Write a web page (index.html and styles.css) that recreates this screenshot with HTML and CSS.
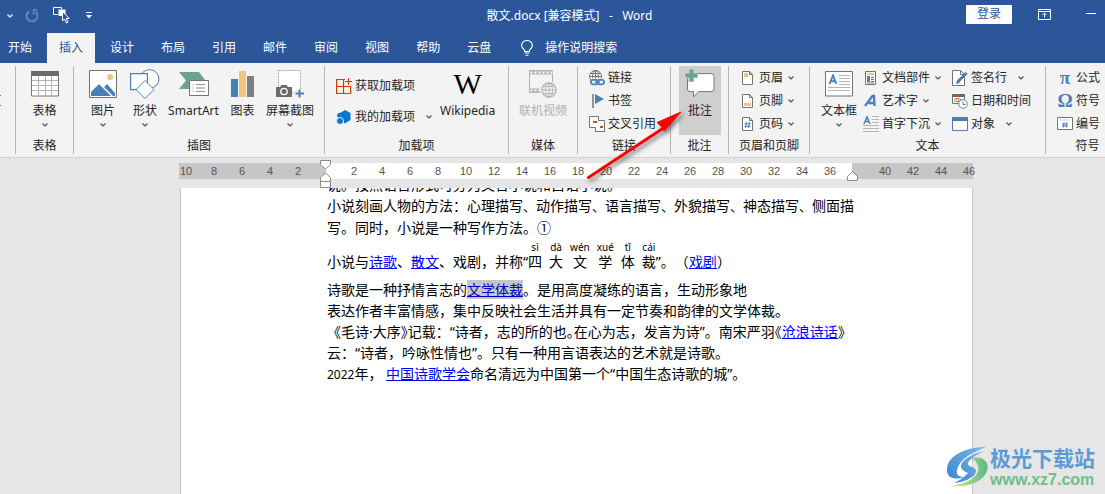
FILE: index.html
```html
<!DOCTYPE html>
<html lang="zh-CN">
<head>
<meta charset="utf-8">
<title>散文.docx [兼容模式] - Word</title>
<link rel="stylesheet" href="styles.css">
</head>
<body>
<svg class="defs" aria-hidden="true">
  <symbol id="chev" viewBox="0 0 6 4"><path d="M.5.5 3 3 5.500.5" fill="none" stroke="#555" stroke-width="1.2"/></symbol>
  <symbol id="sheet" viewBox="0 0 16 16"><path d="M2.500 1.500h7l3 3v10h-10z" fill="#fff" stroke="#747474"/><path d="M9.500 1.500v3h3" fill="none" stroke="#747474"/></symbol>
</svg>

<header class="titlebar">
  <div class="quick">
    <button class="qbtn" aria-label="撤消选项"><svg width="6" height="4" viewBox="0 0 6 4"><path d="M.5.5 3 3 5.500.5" fill="none" stroke="#dfe7f3" stroke-width="1.300"/></svg></button>
    <button class="qbtn redo" aria-label="重复"><svg width="14" height="14" viewBox="0 0 14 14"><path d="M4 2.300A5.500 5.500 0 1 0 10.500 2.600" fill="none" stroke="#6486bb" stroke-width="2"/><path d="M8 .8h4.500M8.500 1v5" fill="none" stroke="#6486bb" stroke-width="1.600"/></svg></button>
    <button class="qbtn select" aria-label="选择对象"><svg width="17" height="17" viewBox="0 0 17 17"><path d="M5 7.500H.5v-7h8v2" fill="none" stroke="#fff"/><path d="M5.500 2.500h7V8L9 5v4H5.500z" fill="#fff"/><path d="M9.500 4.500v9.500l2-2 2 4 1.500-.8-1.700-3.700h2.900z" fill="#2b579a" stroke="#fff"/></svg></button>
    <button class="qbtn" aria-label="自定义快速访问工具栏"><svg width="6" height="7" viewBox="0 0 6 7"><path d="M0 .5h6" stroke="#fff"/><path d="M0 3h6L3 6.500z" fill="#fff"/></svg></button>
  </div>
  <div class="doctitle">散文.docx [兼容模式] &nbsp;&nbsp;-&nbsp;&nbsp; Word</div>
  <div class="winctl">
    <button class="signin">登录</button>
    <button class="qbtn ribbonopt" aria-label="功能区显示选项"><svg width="13" height="11" viewBox="0 0 13 11"><path d="M.5.500h12v10H.5zM.5 2.500h12M6.500 8.500V4.500M4.500 6l2-2 2 2" fill="none" stroke="#fff"/></svg></button>
    <button class="qbtn" aria-label="最小化"><svg width="10" height="2" viewBox="0 0 10 2"><path d="M0 .5h10" stroke="#fff"/></svg></button>
  </div>
</header>

<nav class="tabs">
  <button class="tab first">开始</button>
  <button class="tab active">插入</button>
  <button class="tab">设计</button>
  <button class="tab">布局</button>
  <button class="tab">引用</button>
  <button class="tab">邮件</button>
  <button class="tab">审阅</button>
  <button class="tab">视图</button>
  <button class="tab">帮助</button>
  <button class="tab">云盘</button>
  <button class="tell"><svg width="12" height="16" viewBox="0 0 12 16"><path d="M3.500 11.500V10C2 8.800.6 7.500.6 5.500a5.400 5 0 0 1 10.800 0c0 2-1.400 3.300-2.900 4.500v1.500zM3.500 13h5M4.500 15.300h3" fill="none" stroke="#fff" stroke-width="1.100"/></svg>操作说明搜索</button>
</nav>

<section class="ribbon">
  <div class="group g-page"><div class="body"><i class="sliver"></i></div></div>

  <div class="group g-table">
    <div class="body">
      <button class="big"><svg width="28" height="26" viewBox="0 0 28 26"><path d="M.5.500h27v24.500H.5z" fill="#fff" stroke="#747474"/><path d="M0 0h28v5H0z" fill="#6b6b6b"/><path d="M1 9.500h26M1 14.500h26M1 19.500h26M7.500 5v19.500M14.500 5v19.500M20.500 5v19.500" stroke="#b5b5b5"/></svg><span>表格</span><svg class="chev"><use href="#chev"/></svg></button>
    </div>
    <div class="label">表格</div>
  </div>

  <div class="group g-illus">
    <div class="body">
      <button class="big w42"><svg width="28" height="28" viewBox="0 0 28 28"><path d="M.5.500h27v27H.5z" fill="#fff" stroke="#747474"/><circle cx="21" cy="7" r="3" fill="#eec67c"/><path d="M2 26v-4l8-8L22 26zM15 17l3-3 8 9v3h-2z" fill="#4a80b8"/></svg><span>图片</span><svg class="chev"><use href="#chev"/></svg></button>
      <button class="big w42"><svg width="30" height="30" viewBox="0 0 30 30"><circle cx="19.500" cy="10" r="9.400" fill="#fff" stroke="#4a80b8"/><path d="M.6 4.600h16.800v16H.6z" fill="#fff" stroke="#4a80b8" stroke-width="1.200"/><path d="M15 11.500l9 9-9 9-9-9z" fill="#fff" stroke="#4a80b8"/></svg><span>形状</span><svg class="chev"><use href="#chev"/></svg></button>
      <button class="big w55"><svg width="30" height="26" viewBox="0 0 30 26"><path d="M0 1h20l6 8H10v9H0l7-8.500z" fill="#6ba292"/><path d="M10.500 9.500h19v15h-19z" fill="#fff" stroke="#747474"/><path d="M13.500 13.500h1M13.500 17h1M13.500 20.500h1M17 13.500h9M17 17h9M17 20.500h9" stroke="#8f8f8f"/></svg><span>SmartArt</span></button>
      <button class="big w43"><svg width="23" height="26" viewBox="0 0 23 26"><path d="M0 8h7v18H0z" fill="#4a80b8"/><path d="M8 0h7v26H8z" fill="#eec67c"/><path d="M16 5h7v21h-7z" fill="#7f7f7f"/></svg><span>图表</span></button>
      <button class="big w52"><svg width="28" height="28" viewBox="0 0 28 28"><path d="M2.500.5h22v22h-22z" fill="#fff" stroke="#a8a8a8" stroke-dasharray="2 1"/><path d="M0 17h4l1.500-2h5L12 17h4v10H0z" fill="#6b6b6b"/><circle cx="8" cy="21.500" r="3.200" fill="none" stroke="#fff" stroke-width="1.300"/><path d="M17 20h11v8H17z" fill="#f3f3f3"/><path d="M19.500 23.500H28M23.500 19.500v8" stroke="#4a80b8" stroke-width="2"/></svg><span>屏幕截图</span><svg class="chev"><use href="#chev"/></svg></button>
    </div>
    <div class="label">插图</div>
  </div>

  <div class="group g-addins">
    <div class="body">
      <div class="rows tall">
        <button class="small"><svg width="16" height="16" viewBox="0 0 16 16"><path d="M9 1.500H.6v14h14V8M7.500 1.500v14M.6 8.500h14M12.500 0v7M9 3.500h7" fill="none" stroke="#d83b01" stroke-width="1.200"/></svg><span>获取加载项</span></button>
        <button class="small wide"><svg width="16" height="16" viewBox="0 0 16 16"><path d="M3.500 4.500 9 1l5.500 3v7L9 14.500 7 13z" fill="#0078d4"/><circle cx="4" cy="6.500" r="2.800" fill="#0078d4"/><circle cx="4" cy="12" r="3.500" fill="#0078d4" stroke="#f3f3f3"/></svg><span>我的加载项</span><svg class="chev"><use href="#chev"/></svg></button>
      </div>
      <button class="big wiki"><b class="wlogo">W</b><span>Wikipedia</span></button>
    </div>
    <div class="label">加载项</div>
  </div>

  <div class="group g-media">
    <div class="body">
      <button class="big" disabled><svg width="28" height="30" viewBox="0 0 28 30"><path d="M.5 1.500h23v22H.5z" fill="#f6f3f6" stroke="#b5b1b5"/><path d="M0 3.500h24M0 21.500h24" stroke="#b5b1b5" stroke-width="4"/><path d="M1.500 3.500h22M1.500 21.500h12" stroke="#fff" stroke-width="2" stroke-dasharray="2 2"/><circle cx="20" cy="21" r="9" fill="#f3f3f3"/><circle cx="20" cy="21" r="7" fill="#f7f7f7" stroke="#b5b1b5" stroke-width="1.300"/><path d="M13 21h14M14 17.500h12M14 24.500h12M20 14v14" stroke="#b5b1b5"/><ellipse cx="20" cy="21" rx="3.500" ry="7" fill="none" stroke="#b5b1b5"/></svg><span>联机视频</span></button>
    </div>
    <div class="label">媒体</div>
  </div>

  <div class="group g-links">
    <div class="body">
      <div class="rows">
        <button class="small"><svg width="16" height="16" viewBox="0 0 16 16"><circle cx="6.500" cy="6.500" r="6" fill="#fff" stroke="#747474"/><path d="M.5 6.500h12M1.500 3.500h10M6.500.5v9" stroke="#747474"/><ellipse cx="6.500" cy="6.500" rx="3" ry="6" fill="none" stroke="#747474"/><path d="M2 8.500h14v7H2z" fill="#f3f3f3"/><rect x="1.800" y="9.800" width="7" height="4.600" rx="2.300" fill="none" stroke="#4a80b8" stroke-width="1.700"/><rect x="8.200" y="9.800" width="7" height="4.600" rx="2.300" fill="none" stroke="#4a80b8" stroke-width="1.700"/><path d="M6 12.100h5" stroke="#4a80b8" stroke-width="1.500"/></svg><span>链接</span></button>
        <button class="small"><svg width="16" height="16" viewBox="0 0 16 16"><path d="M4 1v14" stroke="#747474" stroke-width="1.500"/><path d="M6 1l9 5-9 5z" fill="#4a80b8"/></svg><span>书签</span></button>
        <button class="small"><svg width="16" height="16" viewBox="0 0 16 16"><path d="M.5.500h9v11h-9z" fill="#fff" stroke="#747474"/><path d="M9.500 4.500h6v11h-9v-4" fill="#fff" stroke="#747474"/><path d="M4 6h4M11 11h3" stroke="#d24726" stroke-width="2"/></svg><span>交叉引用</span></button>
      </div>
    </div>
    <div class="label">链接</div>
  </div>

  <div class="group g-comment">
    <div class="body">
      <button class="big hot"><svg width="32" height="30" viewBox="0 0 32 30"><path d="M7 4.600h20a3 3 0 0 1 3 3v12a3 3 0 0 1-3 3H14.500L9.500 28v-5.400H6a2.500 2.500 0 0 1-2.500-2.500V8z" fill="#fff" stroke="#7a7a7a"/><path d="M7 0v13M.500 6.500h13" stroke="#cfcfcf" stroke-width="6"/><path d="M7.500.5v12M1.500 6.500h12" stroke="#6ba292" stroke-width="4"/></svg><span>批注</span></button>
    </div>
    <div class="label">批注</div>
  </div>

  <div class="group g-header">
    <div class="body">
      <div class="rows">
        <button class="small"><svg width="16" height="16" viewBox="0 0 16 16"><use href="#sheet"/><path d="M4 3h4v4H4z" fill="#eec67c"/></svg><span>页眉</span><svg class="chev"><use href="#chev"/></svg></button>
        <button class="small"><svg width="16" height="16" viewBox="0 0 16 16"><use href="#sheet"/><path d="M4 10h7v3H4z" fill="#eec67c"/></svg><span>页脚</span><svg class="chev"><use href="#chev"/></svg></button>
        <button class="small"><svg width="16" height="16" viewBox="0 0 16 16"><use href="#sheet"/><path d="M6.500 6 5.500 12M9.500 6 8.500 12M4.500 7.800h6M4.500 10.300h6" stroke="#4a80b8"/></svg><span>页码</span><svg class="chev"><use href="#chev"/></svg></button>
      </div>
    </div>
    <div class="label">页眉和页脚</div>
  </div>

  <div class="group g-text">
    <div class="body">
      <button class="big textbox"><svg width="28" height="26" viewBox="0 0 28 26"><path d="M.5.500h27v24.500H.5z" fill="#fff" stroke="#747474"/><path d="M4.500 13 8 4.500l3.500 8.500M5.500 10.300h5" fill="none" stroke="#4a80b8" stroke-width="1.900"/><path d="M14 4.500h11M14 7.500h11M14 10.500h11M14 13.500h11M3 16.500h22M3 19.500h22" stroke="#b5b5b5"/></svg><span>文本框</span><svg class="chev"><use href="#chev"/></svg></button>
      <div class="rows parts">
        <button class="small"><svg width="16" height="16" viewBox="0 0 16 16"><path d="M2.500 1.500h10v13h-10z" fill="#fff" stroke="#747474"/><path d="M4 4h7" stroke="#eec67c" stroke-width="2"/><path d="M4 6h3v6H4z" fill="#4a80b8"/><path d="M8 7.500h3M8 9.500h3M8 11.500h3M4 13h7" stroke="#747474"/></svg><span>文档部件</span><svg class="chev"><use href="#chev"/></svg></button>
        <button class="small"><svg width="16" height="16" viewBox="0 0 16 16"><path d="M2 13 9.500 3h1.500l.5 10M5.500 10h6" fill="none" stroke="#4a80b8" stroke-width="2.300"/></svg><span>艺术字</span><svg class="chev"><use href="#chev"/></svg></button>
        <button class="small"><svg width="16" height="16" viewBox="0 0 16 16"><path d="M1 8 4 .8 7 8M2 5.500h4" fill="none" stroke="#4a80b8" stroke-width="1.500"/><path d="M9 .5h7M9 3.500h7M9 6.500h7M0 9.500h16M0 12.500h16M0 15.500h16" stroke="#b5b5b5"/></svg><span>首字下沉</span><svg class="chev"><use href="#chev"/></svg></button>
      </div>
      <div class="rows objects">
        <button class="small wide"><svg width="16" height="16" viewBox="0 0 16 16"><path d="M.5.500h8l4 4v11h-12z" fill="#fff" stroke="#747474"/><path d="M8.500.5v4h4" fill="none" stroke="#747474"/><path d="M6 11.500 14.500 3" stroke="#4a80b8" stroke-width="3"/><path d="M4 14l1-4 3 3z" fill="#4a80b8"/></svg><span>签名行</span><svg class="chev"><use href="#chev"/></svg></button>
        <button class="small"><svg width="16" height="16" viewBox="0 0 16 16"><path d="M.5 1.500h12v9H.5z" fill="#fff" stroke="#747474"/><path d="M0 1h13v3H0z" fill="#6b6b6b"/><path d="M2 6.500h9M2 8.500h9" stroke="#8f8f8f" stroke-dasharray="1 1"/><path d="M4 5.500h3v3H4z" fill="#fff" stroke="#e07020"/><circle cx="11" cy="11" r="4.300" fill="#fff" stroke="#5f8cbf"/><path d="M11 8.500V11.500h2.500" fill="none" stroke="#4a80b8"/></svg><span>日期和时间</span></button>
        <button class="small wide"><svg width="16" height="16" viewBox="0 0 16 16"><path d="M.5 1.500h15v13H.5z" fill="#fff" stroke="#4a80b8"/><path d="M0 1h16v4H0z" fill="#4a80b8"/></svg><span>对象</span><svg class="chev"><use href="#chev"/></svg></button>
      </div>
    </div>
    <div class="label">文本</div>
  </div>

  <div class="group g-symbol">
    <div class="body">
      <div class="rows">
        <button class="small"><b class="greek">π</b><span>公式</span></button>
        <button class="small"><b class="greek">Ω</b><span>符号</span></button>
        <button class="small"><svg width="16" height="16" viewBox="0 0 16 16"><path d="M.5 1.500h15v12H.5z" fill="#fff" stroke="#747474"/><path d="M3 4h10" stroke="#b5b5b5" stroke-dasharray="2 1"/><path d="M7 6.500 6.300 11.500M9.700 6.500 9 11.500M5 8h6M5 10h6" stroke="#4a80b8"/></svg><span>编号</span></button>
      </div>
    </div>
    <div class="label">符号</div>
  </div>
</section>

<main class="workspace">
  <div class="ruler">
    <div class="seg before"><span>10</span><span>8</span><span>6</span><span>4</span><span>2</span></div>
    <div class="seg live">
      <svg class="indent left" width="11" height="28" viewBox="0 0 11 28"><path d="M.5.500h10v4l-5 4.500-5-4.500zM.5 21.500v-4l5-4.500 5 4.500v4zM.5 21.500h10v6H.5z" fill="#fff" stroke="#8a8a8a"/></svg>
      <span>2</span><span>4</span><span>6</span><span>8</span><span>10</span><span>12</span><span>14</span><span>16</span><span>18</span><span>20</span><span>22</span><span>24</span><span>26</span><span>28</span><span>30</span><span>32</span><span>34</span><span>36</span>
      <svg class="indent right" width="11" height="10" viewBox="0 0 11 10"><path d="M.5 9.500v-4l5-5 5 5v4z" fill="#fff" stroke="#8a8a8a"/></svg>
    </div>
    <div class="seg after"><span>40</span><span>42</span><span>44</span><span>46</span></div>
  </div>

  <article class="page">
    <p class="cut">说。按照语言形式可分为文言小说和白话小说。</p>
    <p class="listing">小说刻画人物的方法：心理描写<i>、</i>动作描写<i>、</i>语言描写<i>、</i>外貌描写<i>、</i>神态描写<i>、</i>侧面描<br>写。同时，小说是一种写作方法。①</p>
    <p class="pinyin">小说与<a href="#">诗歌</a>、<a href="#">散文</a>、戏剧，并称“<ruby>四<rt>sì</rt></ruby><ruby>大<rt>dà</rt></ruby><ruby>文<rt>wén</rt></ruby><ruby>学<rt>xué</rt></ruby><ruby>体<rt>tǐ</rt></ruby><ruby class="end">裁<rt>cái</rt></ruby>”。（<a href="#">戏剧</a>）</p>
    <p>诗歌是一种抒情言志的<a href="#" class="selected">文学体裁</a>。是用高度凝练的语言，生动形象地<br>表达作者丰富情感，集中反映社会生活并具有一定节奏和韵律的文学体裁。<br>《毛诗·大序<span class="half">》</span>记载：“诗者，志的所的也<span class="half">。</span>在心为志，发言为诗”。南宋严羽<span class="half">《</span><a href="#">沧浪诗话</a>》<br>云：“诗者，吟咏性情也”。只有一种用言语表达的艺术就是诗歌。<br><span class="num">2022</span>年， <a href="#">中国诗歌学会</a>命名清远为中国第一个“中国生态诗歌的城”。</p>
  </article>
</main>

<svg class="arrow" width="110" height="80" viewBox="0 0 110 80" aria-hidden="true"><path d="M8.500 70.500 82 22" stroke="#fe0000" stroke-width="3" stroke-linecap="round"/><path d="M77 15.500 101 5 84 24 82 20z" fill="#fe0000" stroke="#fe0000"/></svg>

<aside class="brand">
  <svg width="44" height="42" viewBox="0 0 44 42" aria-hidden="true">
    <defs>
      <linearGradient id="ga" x1="0" y1="1" x2="1" y2="0"><stop offset="0" stop-color="#3f86cf"/><stop offset="1" stop-color="#78b9e4"/></linearGradient>
      <linearGradient id="gb" x1="0" y1="0" x2="1" y2="0"><stop offset="0" stop-color="#e5ed9a"/><stop offset=".6" stop-color="#8fd37e"/><stop offset="1" stop-color="#55b889"/></linearGradient>
    </defs>
    <path d="M40 1C22 1 3 8 1 22c-1 9 6 13 17 9-7 0-9-4-6-10C16 12 27 6 40 1z" fill="url(#ga)"/>
    <path d="M26 12c11-2 18 4 15 13C37 35 24 42 3 40c16-2 27-7 29-15 1-5-1-9-6-13z" fill="url(#gb)"/>
    <path d="M38 5C26 8 17 13 15 19c-1 4 3 6 7 8-5 5-9 8-14 10 10-1 20-5 22-11 1-5-8-5-8-8 0-4 8-9 16-13z" fill="url(#ga)"/>
  </svg>
  <div><div class="bname">极光下载站</div><div class="burl">www.xz7.com</div></div>
</aside>
</body>
</html>
```
FILE: styles.css
```css
* { box-sizing: border-box; }
body {
  margin: 0;
  min-height: 100vh;
  display: flex;
  flex-direction: column;
  overflow: hidden;
  position: relative;
  background: #e6e6e6;
  color: #262626;
  font: 12px/16px "Noto Sans", "Noto Sans CJK SC", sans-serif;
}
button {
  margin: 0;
  padding: 0;
  border: 0;
  background: none;
  color: inherit;
  font: inherit;
  white-space: nowrap;
}
svg { display: block; flex: none; }
.defs { position: absolute; width: 0; height: 0; }

/* title bar */
.titlebar {
  display: grid;
  grid-template-columns: 1fr auto 1fr;
  height: 33px;
  background: #2b579a;
  color: #fff;
}
.quick { display: flex; align-items: center; padding: 0 0 2px 7px; }
.qbtn { display: flex; align-items: center; }
.redo { margin-left: 12px; }
.select { margin: 0 16px 0 14px; }
.doctitle { padding-top: 8px; padding-left: 34px; }
.winctl { display: flex; align-items: center; justify-content: flex-end; padding: 0 9px 5px 0; }
.signin { width: 46px; height: 19px; border-radius: 1px; background: #fff; color: #2b579a; }
.ribbonopt { margin: 0 35px 0 26px; }

/* tabs */
.tabs { display: flex; gap: 3px; height: 30px; background: #2b579a; color: #fff; }
.tab { padding: 0 12px; }
.tab.first { padding-left: 8px; }
.tab.active { background: #f3f3f3; color: #2b579a; }
.tell { display: flex; align-items: center; gap: 12px; margin-left: 15px; }

/* ribbon */
.ribbon {
  display: flex;
  height: 95px;
  padding: 3px 0 3px;
  overflow: hidden;
  background: #f3f3f3;
  border-bottom: 1px solid #d2d2d2;
}
.group {
  flex: none;
  display: flex;
  flex-direction: column;
  border-right: 1px solid #b5b5b5;
}
.body { display: flex; flex: none; height: 69px; }
.label { padding-top: 3px; text-align: center; }
.big {
  display: grid;
  grid-template-rows: 36px 17px 12px;
  justify-items: center;
  align-items: center;
  align-content: start;
  flex: none;
}
.g-table .big, .g-media .big { flex: 1; }
.big:disabled { color: #b1b1b1; }
.w42 { width: 42px; }
.w43 { width: 43px; }
.w52 { width: 52px; }
.w55 { width: 55px; }
.hot { width: 42px; background: #cfcfcf; }
.chev { width: 6px; height: 4px; }
.rows { display: grid; grid-template-rows: repeat(3, 23px); }
.rows.tall { grid-template-rows: repeat(2, 31px); padding-top: 4px; }
.small { display: flex; align-items: center; gap: 3px; }
.small .chev { margin-left: 2px; }
.small.wide .chev { margin-left: 8px; }
.g-page { width: 16px; }
.sliver { width: 1px; height: 11px; margin-top: 29px; border: solid #777; border-width: 1px 0; }
.g-table { width: 58px; }
.g-illus { width: 251px; }
.g-illus .body { padding-left: 8px; }
.g-addins { width: 184px; }
.g-addins .body { padding-left: 11px; }
.wiki { margin-left: 8px; }
.wlogo { font: 30px/36px "Liberation Serif", serif; color: #000; }
.g-media { width: 69px; }
.g-links { width: 93px; }
.g-links .body { padding-left: 11px; }
.g-comment { width: 58px; }
.g-comment .body { padding-left: 8px; }
.g-header { width: 81px; }
.g-header .body { padding-left: 11px; }
.g-text { width: 236px; }
.g-text .body { padding-left: 8px; }
.textbox { width: 42px; }
.parts { padding-left: 3px; }
.objects { margin-left: 11px; }
.g-symbol { width: 84px; }
.g-symbol .body { padding-left: 11px; }
.greek { width: 16px; text-align: center; font: bold 19px/20px "Liberation Serif", serif; color: #4a80b8; }

/* ruler and page */
.workspace { flex: 1; display: flex; flex-direction: column; padding: 5px 132px 0 179px; }
.ruler { display: flex; height: 16px; color: #555; font: 11px/17px "Liberation Sans", sans-serif; }
.seg { display: flex; position: relative; }
.seg span { flex: none; width: 28px; text-align: center; }
.before { width: 147px; padding-right: 14px; justify-content: flex-end; background: #c6c6c6; }
.live { width: 526px; padding-left: 14px; background: #fff; }
.after { flex: 1; min-width: 0; padding-left: 19px; background: #c6c6c6; }
.indent { position: absolute; z-index: 1; }
.indent.left { left: -6px; top: -3px; }
.indent.right { right: -6px; bottom: -2px; }

.page {
  flex: 1;
  margin: 9px 0 0 1px;
  padding-left: 146px;
  overflow: hidden;
  background: #fff;
  border: solid #c6c6c6;
  border-width: 0 1px;
  color: #000;
  font-size: 14px;
  line-height: 21px;
  white-space: nowrap;
  text-spacing-trim: space-all;
}
.page p { margin: 0; }
.page a { color: #00f; }
.page .cut { margin-top: -14px; }
.listing i { font-size: 13px; font-style: normal; }
.page .pinyin { margin: 5px 0 2px; line-height: 30px; }
.pinyin ruby { margin-right: 7px; }
.pinyin ruby.end { margin-right: 0; }
.pinyin rt { font-size: 10px; line-height: 4px; }
.page .selected { background: #c6c6c6; color: #0000c8; }
.half { font-feature-settings: "halt"; }
.num { font-size: 12px; }

/* overlays */
.arrow { position: absolute; left: 580px; top: 107px; filter: drop-shadow(2px 3px 2px rgba(0, 0, 0, .5)); }
.brand { position: absolute; right: 10px; bottom: 5px; display: flex; align-items: center; }
.bname { color: #5a9bd8; font-size: 21px; font-weight: 700; line-height: 26px; }
.burl { color: #6cc08b; font: 700 16px/18px "Liberation Sans", sans-serif; }
```
